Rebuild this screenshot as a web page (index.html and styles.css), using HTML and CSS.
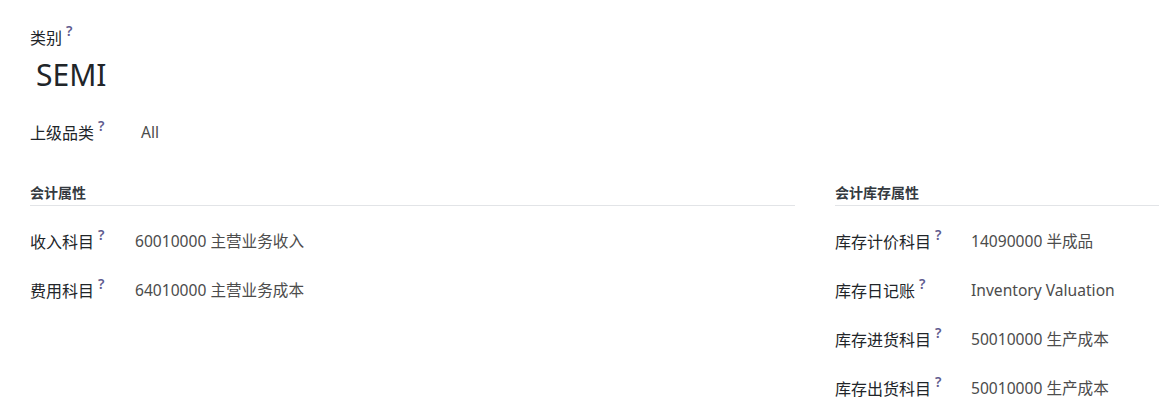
FILE: index.html
```html
<!DOCTYPE html>
<html lang="zh-CN">
<head>
    <meta charset="UTF-8">
    <meta name="viewport" content="width=device-width, initial-scale=1.0">
    <title>产品类别</title>
    <link rel="stylesheet" href="styles.css">
</head>
<body>
    <div class="sheet">
        <div class="title-block">
            <label class="field-label">类别<sup class="tip">?</sup></label>
            <h1 class="title">SEMI</h1>
        </div>

        <div class="field-row top-row">
            <span class="field-label">上级品类<sup class="tip">?</sup></span>
            <span class="field-value">All</span>
        </div>

        <div class="groups">
            <section class="group group-left">
                <h2 class="group-title">会计属性</h2>
                <div class="field-row">
                    <span class="field-label">收入科目<sup class="tip">?</sup></span>
                    <span class="field-value">60010000 主营业务收入</span>
                </div>
                <div class="field-row">
                    <span class="field-label">费用科目<sup class="tip">?</sup></span>
                    <span class="field-value">64010000 主营业务成本</span>
                </div>
            </section>

            <section class="group group-right">
                <h2 class="group-title">会计库存属性</h2>
                <div class="field-row">
                    <span class="field-label">库存计价科目<sup class="tip">?</sup></span>
                    <span class="field-value">14090000 半成品</span>
                </div>
                <div class="field-row">
                    <span class="field-label">库存日记账<sup class="tip">?</sup></span>
                    <span class="field-value">Inventory Valuation</span>
                </div>
                <div class="field-row">
                    <span class="field-label">库存进货科目<sup class="tip">?</sup></span>
                    <span class="field-value">50010000 生产成本</span>
                </div>
                <div class="field-row">
                    <span class="field-label">库存出货科目<sup class="tip">?</sup></span>
                    <span class="field-value">50010000 生产成本</span>
                </div>
            </section>
        </div>
    </div>
</body>
</html>
```

FILE: styles.css
```css
body {
    font-family: "Noto Sans", "Noto Sans CJK SC", sans-serif;
    font-size: 16px;
    color: #212529;
    background-color: #fff;
    margin: 0;
    padding: 0;
}

.sheet {
    padding: 25px 0 0 30px;
}

.title-block {
    display: flex;
    flex-direction: column;
}

.field-label {
    color: #212529;
    white-space: nowrap;
}

.tip {
    color: #5f5b8f;
    font-size: 14px;
    font-weight: 600;
    margin-left: 4px;
    vertical-align: 8px;
    line-height: 0;
}

.title {
    font-size: 30px;
    font-weight: 400;
    margin: 6px 0 0 6px;
    line-height: 40px;
    color: #212529;
}

.field-row {
    display: flex;
    align-items: center;
    height: 49px;
}

.field-value {
    color: #4c4c4c;
    font-size: 15.6px;
}

.top-row {
    margin-top: 22px;
    height: 30px;
}

.top-row .field-label {
    width: 111px;
}

.groups {
    display: grid;
    grid-template-columns: 765px 1fr;
    column-gap: 40px;
    margin-top: 36px;
}

.group-title {
    font-size: 14px;
    font-weight: 700;
    color: #343a40;
    margin: 0 0 10px 0;
    padding-bottom: 2px;
    border-bottom: 1px solid #e2e4e7;
    line-height: 20px;
}

.group-left .field-label {
    width: 105px;
}

.group-right .field-label {
    width: 136px;
}
```
